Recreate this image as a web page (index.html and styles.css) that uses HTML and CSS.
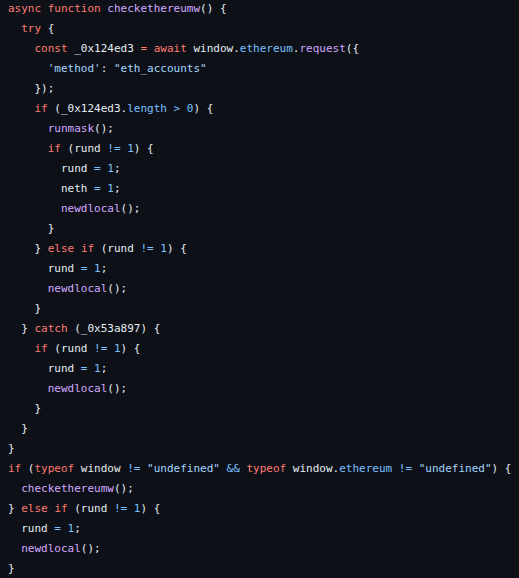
FILE: index.html
```html
<!DOCTYPE html>
<html>
<head>
<meta charset="utf-8">
<link rel="stylesheet" href="styles.css">
</head>
<body>
<pre class="code"><span class="k">async</span> <span class="k">function</span> <span class="f">checkethereumw</span>() {
  <span class="k">try</span> {
    <span class="k">const</span> _0x124ed3 <span class="k">=</span> <span class="k">await</span> window.<span class="c">ethereum</span>.<span class="f">request</span>({
      <span class="s">'method'</span>: <span class="s">"eth_accounts"</span>
    });
    <span class="k">if</span> (_0x124ed3.<span class="c">length</span> <span class="c">&gt;</span> <span class="c">0</span>) {
      <span class="f">runmask</span>();
      <span class="k">if</span> (rund <span class="c">!=</span> <span class="c">1</span>) {
        rund <span class="c">=</span> <span class="c">1</span>;
        neth <span class="c">=</span> <span class="c">1</span>;
        <span class="f">newdlocal</span>();
      }
    } <span class="k">else</span> <span class="k">if</span> (rund <span class="c">!=</span> <span class="c">1</span>) {
      rund <span class="c">=</span> <span class="c">1</span>;
      <span class="f">newdlocal</span>();
    }
  } <span class="k">catch</span> (_0x53a897) {
    <span class="k">if</span> (rund <span class="c">!=</span> <span class="c">1</span>) {
      rund <span class="c">=</span> <span class="c">1</span>;
      <span class="f">newdlocal</span>();
    }
  }
}
<span class="k">if</span> (<span class="k">typeof</span> window <span class="c">!=</span> <span class="s">"undefined"</span> <span class="c">&amp;&amp;</span> <span class="k">typeof</span> window.<span class="c">ethereum</span> <span class="c">!=</span> <span class="s">"undefined"</span>) {
  <span class="f">checkethereumw</span>();
} <span class="k">else</span> <span class="k">if</span> (rund <span class="c">!=</span> <span class="c">1</span>) {
  rund <span class="c">=</span> <span class="c">1</span>;
  <span class="f">newdlocal</span>();
}</pre>
</body>
</html>
```

FILE: styles.css
```css
html, body {
  margin: 0;
  padding: 0;
  background: #0d1117;
  height: 100%;
  overflow: hidden;
}
.code {
  margin: 0;
  padding: 0 8px;
  margin-top: -1px;
  font-family: "DejaVu Sans Mono", monospace;
  font-size: 11px;
  line-height: 20px;
  color: #e6edf3;
  white-space: pre;
}
.k { color: #ff7b72; }
.f { color: #d2a8ff; }
.c { color: #79c0ff; }
.s { color: #a5d6ff; }
```
